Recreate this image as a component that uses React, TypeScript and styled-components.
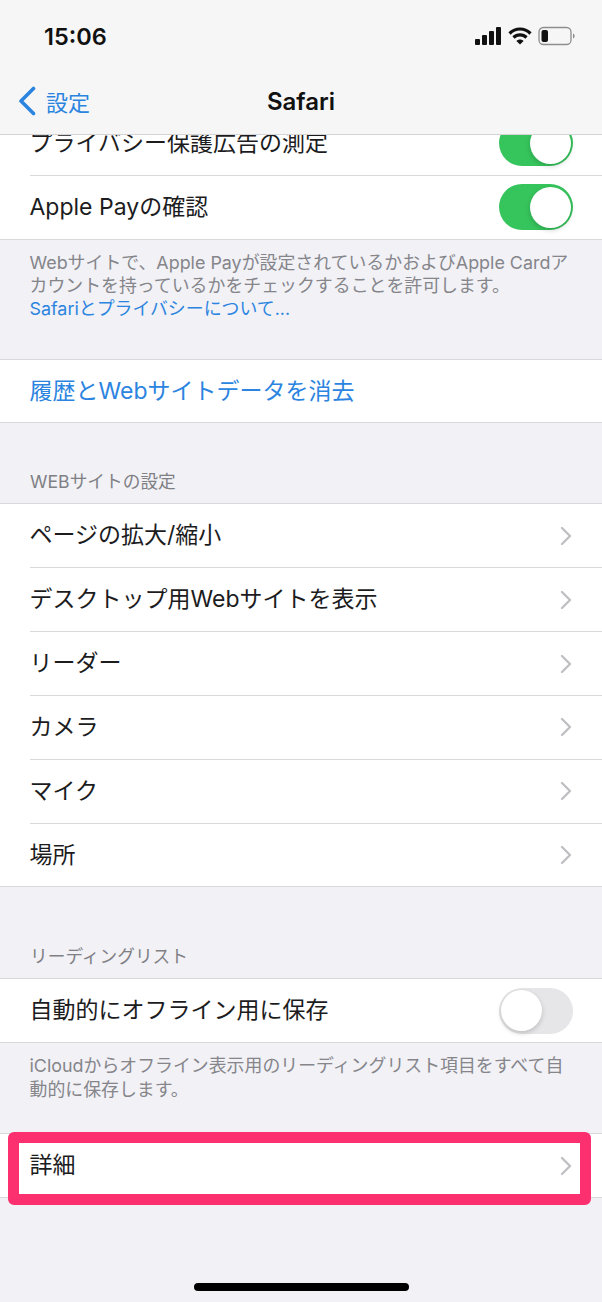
import React from "react";
import styled, { createGlobalStyle } from "styled-components";

const Global = createGlobalStyle`
  html, body { margin: 0; padding: 0; background: #f1f1f6; }
  body { font-family: Inter, "Noto Sans CJK JP", sans-serif; -webkit-font-smoothing: antialiased; }
  * { box-sizing: border-box; }
`;

const Screen = styled.div`
  position: relative;
  width: 602px;
  height: 1302px;
  overflow: hidden;
  background: #f1f1f6;
`;

const NavBar = styled.header`
  position: relative;
  z-index: 2;
  height: 135px;
  background: #f6f6f6;
  border-bottom: 1px solid #d5d5d7;
  display: flex;
  flex-direction: column;
`;

const StatusBar = styled.div`
  height: 70px;
  padding: 2px 26px 0 44px;
  display: flex;
  align-items: center;
  justify-content: space-between;
`;

const Clock = styled.span`
  font-size: 23.5px;
  font-weight: 600;
  color: #111;
`;

const StatusIcons = styled.div`
  display: flex;
  align-items: center;
  gap: 6px;
`;

const NavRow = styled.div`
  position: relative;
  height: 62px;
  display: flex;
  align-items: center;
  justify-content: center;
`;

const BackLink = styled.div`
  position: absolute;
  left: 18px;
  top: 15px;
  display: flex;
  align-items: center;
  gap: 10px;
  font-size: 22px;
  color: #2b84e0;
`;

const NavTitle = styled.h1`
  margin: 0;
  font-size: 24px;
  font-weight: 600;
  color: #111;
`;

const Content = styled.main`
  display: flex;
  flex-direction: column;
  margin-top: -24px;
`;

const Group = styled.section`
  background: #fff;
  border-top: 1px solid #d9d9dc;
  border-bottom: 1px solid #d9d9dc;
`;

const Row = styled.div`
  position: relative;
  height: 62.83px;
  margin-top: 1px;
  padding: 0 30px 0 29.5px;
  display: flex;
  align-items: center;
  justify-content: space-between;
  font-size: 23px;
  color: #1c1c1e;
  &:first-child { margin-top: 0; }
  & + &::before {
    content: "";
    position: absolute;
    left: 30px;
    right: 0;
    top: -1px;
    height: 1px;
    background: #d9d9dc;
  }
`;

const Label = styled.span<{ $link?: boolean }>`
  margin-bottom: 5px;
  color: ${(p) => (p.$link ? "#2b84e0" : "inherit")};
`;

const Toggle = styled.span<{ $on?: boolean }>`
  position: relative;
  flex: none;
  width: 74px;
  height: 46px;
  margin-right: -1px;
  border-radius: 23px;
  background: ${(p) => (p.$on ? "#36c45c" : "#e6e6e8")};
  &::after {
    content: "";
    position: absolute;
    top: 2.5px;
    left: ${(p) => (p.$on ? "31px" : "2px")};
    width: 41px;
    height: 41px;
    border-radius: 50%;
    background: #fff;
    box-shadow: 0 2px 5px rgba(0, 0, 0, 0.18);
  }
`;

const Caption = styled.p<{ $bottom: number }>`
  margin: 0 0 ${(p) => p.$bottom}px;
  padding: 11px 30px 0 29.5px;
  font-size: 17.9px;
  line-height: 23.3px;
  color: #85858a;
`;

const CaptionLink = styled.span`
  display: block;
  color: #2b84e0;
`;

const SectionHeader = styled.h2<{ $top: number }>`
  margin: ${(p) => p.$top}px 0 0;
  padding: 0 30px 9px;
  font-size: 17.7px;
  line-height: 24px;
  font-weight: 400;
  color: #7f7f84;
`;

const Highlight = styled.div`
  position: absolute;
  z-index: 3;
  left: 8px;
  top: 1132px;
  width: 583px;
  height: 73px;
  border: 11px solid #fc2f6f;
  border-radius: 6px;
`;

const HomeBar = styled.div`
  position: absolute;
  z-index: 3;
  left: 194px;
  top: 1283px;
  width: 215px;
  height: 8px;
  border-radius: 4px;
  background: #000;
`;

const Chevron = () => (
  <svg width="12" height="20" viewBox="0 0 12 20" fill="none">
    <path d="M2 2l8 8-8 8" stroke="#c0c0c4" strokeWidth="2.4" strokeLinecap="round" strokeLinejoin="round" />
  </svg>
);

const BackChevron = () => (
  <svg width="18" height="30" viewBox="0 0 18 30" fill="none">
    <path d="M15.5 2.5L3 15l12.5 12.5" stroke="#2b84e0" strokeWidth="3.6" strokeLinecap="round" strokeLinejoin="round" />
  </svg>
);

const Signal = () => (
  <svg width="27" height="20" viewBox="0 0 27 20" fill="#111">
    <rect x="0" y="13" width="5" height="6" rx="1" />
    <rect x="7" y="9" width="5" height="10" rx="1" />
    <rect x="14" y="5" width="5" height="14" rx="1" />
    <rect x="21" y="1" width="5" height="18" rx="1" />
  </svg>
);

const Wifi = () => (
  <svg width="24" height="20" viewBox="0 0 24 20" fill="none" stroke="#111" strokeWidth="3.2" strokeLinecap="butt">
    <path d="M1.5 7.5C7.5 1.5 16.5 1.5 22.5 7.5" />
    <path d="M5.5 11.5C9 8 15 8 18.5 11.5" />
    <path d="M12 18.5l-3.6-3.6c2-2 5.2-2 7.2 0z" fill="#111" stroke="none" />
  </svg>
);

const Battery = () => (
  <svg width="38" height="20" viewBox="0 0 38 20" fill="none">
    <rect x="1" y="1.5" width="32" height="17" rx="4.5" stroke="#8e8e8e" strokeWidth="1.3" />
    <rect x="3.5" y="4" width="6.5" height="12" rx="2" fill="#111" />
    <path d="M35 7.5c1.2.4 1.6 1.4 1.6 2.5s-.4 2.1-1.6 2.5z" fill="#8e8e8e" />
  </svg>
);

const disclosureRows = ["ページの拡大/縮小", "デスクトップ用Webサイトを表示", "リーダー", "カメラ", "マイク", "場所"];

export default function App() {
  return (
    <Screen>
      <Global />
      <NavBar>
        <StatusBar>
          <Clock>15:06</Clock>
          <StatusIcons>
            <Signal />
            <Wifi />
            <Battery />
          </StatusIcons>
        </StatusBar>
        <NavRow>
          <BackLink>
            <BackChevron />
            設定
          </BackLink>
          <NavTitle>Safari</NavTitle>
        </NavRow>
      </NavBar>
      <Content>
        <Group>
          <Row>
            <Label>プライバシー保護広告の測定</Label>
            <Toggle $on />
          </Row>
          <Row>
            <Label>Apple Payの確認</Label>
            <Toggle $on />
          </Row>
        </Group>
        <Caption $bottom={38.1}>
          Webサイトで、Apple Payが設定されているかおよびApple Cardアカウントを持っているかをチェックすることを許可します。
          <CaptionLink>Safariとプライバシーについて...</CaptionLink>
        </Caption>
        <Group>
          <Row>
            <Label $link>履歴とWebサイトデータを消去</Label>
          </Row>
        </Group>
        <SectionHeader $top={47}>WEBサイトの設定</SectionHeader>
        <Group>
          {disclosureRows.map((label) => (
            <Row key={label}>
              <Label>{label}</Label>
              <Chevron />
            </Row>
          ))}
        </Group>
        <SectionHeader $top={58}>リーディングリスト</SectionHeader>
        <Group>
          <Row>
            <Label>自動的にオフライン用に保存</Label>
            <Toggle />
          </Row>
        </Group>
        <Caption $bottom={32.4}>
          iCloudからオフライン表示用のリーディングリスト項目をすべて自動的に保存します。
        </Caption>
        <Group>
          <Row>
            <Label>詳細</Label>
            <Chevron />
          </Row>
        </Group>
      </Content>
      <Highlight />
      <HomeBar />
    </Screen>
  );
}
